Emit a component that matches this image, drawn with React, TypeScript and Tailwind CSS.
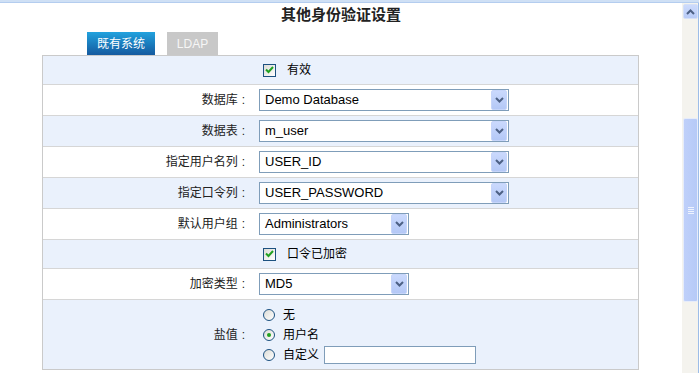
import React from 'react';

const FONT = { fontFamily: '"Liberation Sans", "Noto Sans CJK SC", sans-serif' };

const Chevron: React.FC<{ up?: boolean }> = ({ up }) => (
  <svg width="9" height="6" viewBox="0 0 9 6">
    <path
      d={up ? 'M1 5 L4.5 1.5 L8 5' : 'M1 1 L4.5 4.5 L8 1'}
      fill="none"
      stroke="#4d6185"
      strokeWidth="2"
    />
  </svg>
);

const Select: React.FC<{ value: string; wide?: boolean }> = ({ value, wide = true }) => (
  <div
    className={`flex h-[22px] items-center justify-between border border-[#7f9db9] bg-white ${
      wide ? 'w-[250px]' : 'w-[150px]'
    }`}
  >
    <span className="pl-[5px] text-[13px] text-black">{value}</span>
    <div className="mr-px flex h-[20px] w-[16px] items-center justify-center rounded-[2px] border border-[#c6d5fa] bg-gradient-to-b from-[#cad9fd] to-[#b4c8f6]">
      <Chevron />
    </div>
  </div>
);

const Checkbox: React.FC = () => (
  <div className="flex h-[13px] w-[13px] items-center justify-center border border-[#1c5180] bg-gradient-to-br from-[#dcdcd6] to-white">
    <svg width="9" height="8" viewBox="0 0 9 8">
      <path d="M1 3.5 L3.5 6 L8 1" fill="none" stroke="#21a121" strokeWidth="2" />
    </svg>
  </div>
);

const Radio: React.FC<{ checked?: boolean }> = ({ checked }) => (
  <div className="flex h-[12px] w-[12px] items-center justify-center rounded-full border border-[#1c5180] bg-gradient-to-br from-[#dcdcd6] to-white">
    {checked && <div className="h-[4px] w-[4px] rounded-full bg-[#21a121]" />}
  </div>
);

const Row: React.FC<{
  light?: boolean;
  h: string;
  label?: string;
  last?: boolean;
  children: React.ReactNode;
}> = ({ light, h, label, last, children }) => (
  <div
    className={`flex ${h} ${light ? 'bg-[#eaf1fc]' : 'bg-white'} ${
      last ? '' : 'border-b border-[#d6d6d6]'
    }`}
  >
    <div className="flex w-[208px] items-center justify-end pr-[6px] text-[12px] text-[#222]">
      {label && (
        <>
          <span>{label}</span>
          <span className="ml-[4px]">:</span>
        </>
      )}
    </div>
    <div className="flex flex-1 items-center pl-[8px]">{children}</div>
  </div>
);

const Scrollbar: React.FC = () => (
  <div className="flex w-[17px] border-r border-[#9dbde8] bg-[#f4f3ee]">
    <div className="flex w-[16px] flex-col pl-px">
      <div className="mt-[1px] flex h-[15px] w-[15px] items-center justify-center rounded-[2px] border border-[#d5e0f7] bg-gradient-to-b from-[#cddbfc] to-[#b8cbf7]">
        <Chevron up />
      </div>
      <div className="h-[99px]" />
      <div className="flex h-[184px] w-[15px] items-center justify-center rounded-[2px] border border-[#e6ecfa] bg-gradient-to-r from-[#bfd0fa] to-[#b6caf7]">
        <div className="flex flex-col gap-px">
          <div className="h-px w-[6px] bg-[#eef3fe]" />
          <div className="h-px w-[6px] bg-[#eef3fe]" />
          <div className="h-px w-[6px] bg-[#eef3fe]" />
          <div className="h-px w-[6px] bg-[#eef3fe]" />
        </div>
      </div>
    </div>
  </div>
);

export default function App() {
  return (
    <div className="flex h-[373px] w-[699px] flex-col overflow-hidden bg-white" style={FONT}>
      <div className="h-[3px] border-b border-[#b4cdef] bg-[#cfe0f5]" />
      <div className="flex flex-1">
        <div className="flex w-[682px] flex-col">
          <div className="pt-[2px] text-center text-[15px] font-bold leading-[20px] text-[#222]">
            其他身份验证设置
          </div>
          <div className="mt-[7px] flex gap-[12px] pl-[87px]">
            <div className="flex h-[23px] w-[68px] items-center justify-center bg-gradient-to-b from-[#22a2de] to-[#155a9f] text-[12px] text-white">
              既有系统
            </div>
            <div className="flex h-[23px] w-[51px] items-center justify-center bg-[#c8c8c8] text-[12px] text-[#f6f6f6]">
              LDAP
            </div>
          </div>
          <div className="ml-[42px] w-[597px] border border-[#cacaca]">
            <Row light h="h-[29px]">
              <div className="ml-[4px] flex items-center gap-[11px]">
                <Checkbox />
                <span className="text-[12px] text-black">有效</span>
              </div>
            </Row>
            <Row h="h-[31px]" label="数据库">
              <Select value="Demo Database" />
            </Row>
            <Row light h="h-[31px]" label="数据表">
              <Select value="m_user" />
            </Row>
            <Row h="h-[31px]" label="指定用户名列">
              <Select value="USER_ID" />
            </Row>
            <Row light h="h-[31px]" label="指定口令列">
              <Select value="USER_PASSWORD" />
            </Row>
            <Row h="h-[31px]" label="默认用户组">
              <Select value="Administrators" wide={false} />
            </Row>
            <Row light h="h-[29px]">
              <div className="ml-[4px] flex items-center gap-[11px]">
                <Checkbox />
                <span className="text-[12px] text-black">口令已加密</span>
              </div>
            </Row>
            <Row h="h-[31px]" label="加密类型">
              <Select value="MD5" wide={false} />
            </Row>
            <Row light last h="h-[69px]" label="盐值">
              <div className="ml-[4px] flex flex-col pb-[4px] pt-[5px] text-[12px] text-black">
                <div className="flex h-[20px] items-center gap-[8px]">
                  <Radio />
                  <span>无</span>
                </div>
                <div className="flex h-[20px] items-center gap-[8px]">
                  <Radio checked />
                  <span>用户名</span>
                </div>
                <div className="flex h-[20px] items-center gap-[8px]">
                  <Radio />
                  <span>自定义</span>
                  <div className="-ml-[3px] h-[18px] w-[152px] border border-[#7f9db9] bg-white" />
                </div>
              </div>
            </Row>
          </div>
        </div>
        <Scrollbar />
      </div>
    </div>
  );
}
